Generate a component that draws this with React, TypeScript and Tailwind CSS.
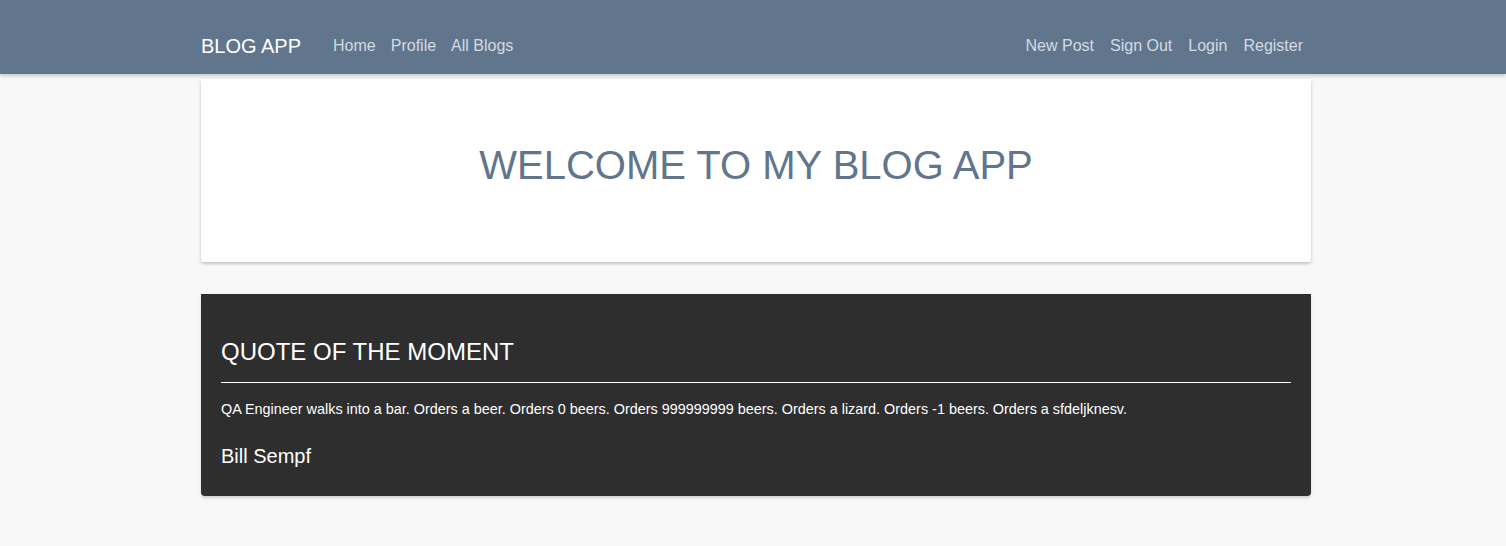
const leftLinks = ["Home", "Profile", "All Blogs"];
const rightLinks = ["New Post", "Sign Out", "Login", "Register"];

export default function App() {
  return (
    <div className="min-h-[546px] bg-[#f8f8f8] font-['Liberation_Sans',Arial,sans-serif]">
      {/* Navbar */}
      <nav className="h-[74px] bg-[#61758d] shadow-[0_2px_4px_rgba(0,0,0,0.2)] pl-[6px] pt-[18px]">
        <div className="mx-auto w-[1110px] h-full flex items-center justify-between pr-[8px]">
          <div className="flex items-center">
            <span className="text-[20px] text-white">BLOG APP</span>
            <div className="ml-[32px] flex gap-[15px] text-[16px] text-[#d3dbe3]">
              {leftLinks.map((l) => (
                <a key={l} href="#">{l}</a>
              ))}
            </div>
          </div>
          <div className="flex gap-[16px] text-[16px] text-[#d3dbe3]">
            {rightLinks.map((l) => (
              <a key={l} href="#">{l}</a>
            ))}
          </div>
        </div>
      </nav>

      <main className="pl-[6px] pt-[5px] pb-[50px]">
        <div className="mx-auto w-[1110px] flex flex-col gap-[32px]">
          {/* Welcome card */}
          <section className="h-[183px] bg-white rounded-[2px] shadow-[0_2px_3px_rgba(0,0,0,0.16),0_1px_4px_rgba(0,0,0,0.08)] flex items-center justify-center">
            <h1 className="text-[40px] text-[#61758d] -mt-[12px]">WELCOME TO MY BLOG APP</h1>
          </section>

          {/* Quote card */}
          <section className="bg-[#2e2e2e] rounded-b-[4px] text-white px-[20px] pt-[44px] pb-[28px] shadow-[0_2px_3px_rgba(0,0,0,0.16)]">
            <h2 className="text-[24px] leading-[28px]">QUOTE OF THE MOMENT</h2>
            <hr className="mt-[16px] border-t border-white" />
            <p className="mt-[17px] text-[14.4px] leading-[18px]">
              QA Engineer walks into a bar. Orders a beer. Orders 0 beers. Orders 999999999 beers. Orders a lizard. Orders -1 beers. Orders a sfdeljknesv.
            </p>
            <p className="mt-[26px] text-[20px] leading-[24px]">Bill Sempf</p>
          </section>
        </div>
      </main>
    </div>
  );
}
